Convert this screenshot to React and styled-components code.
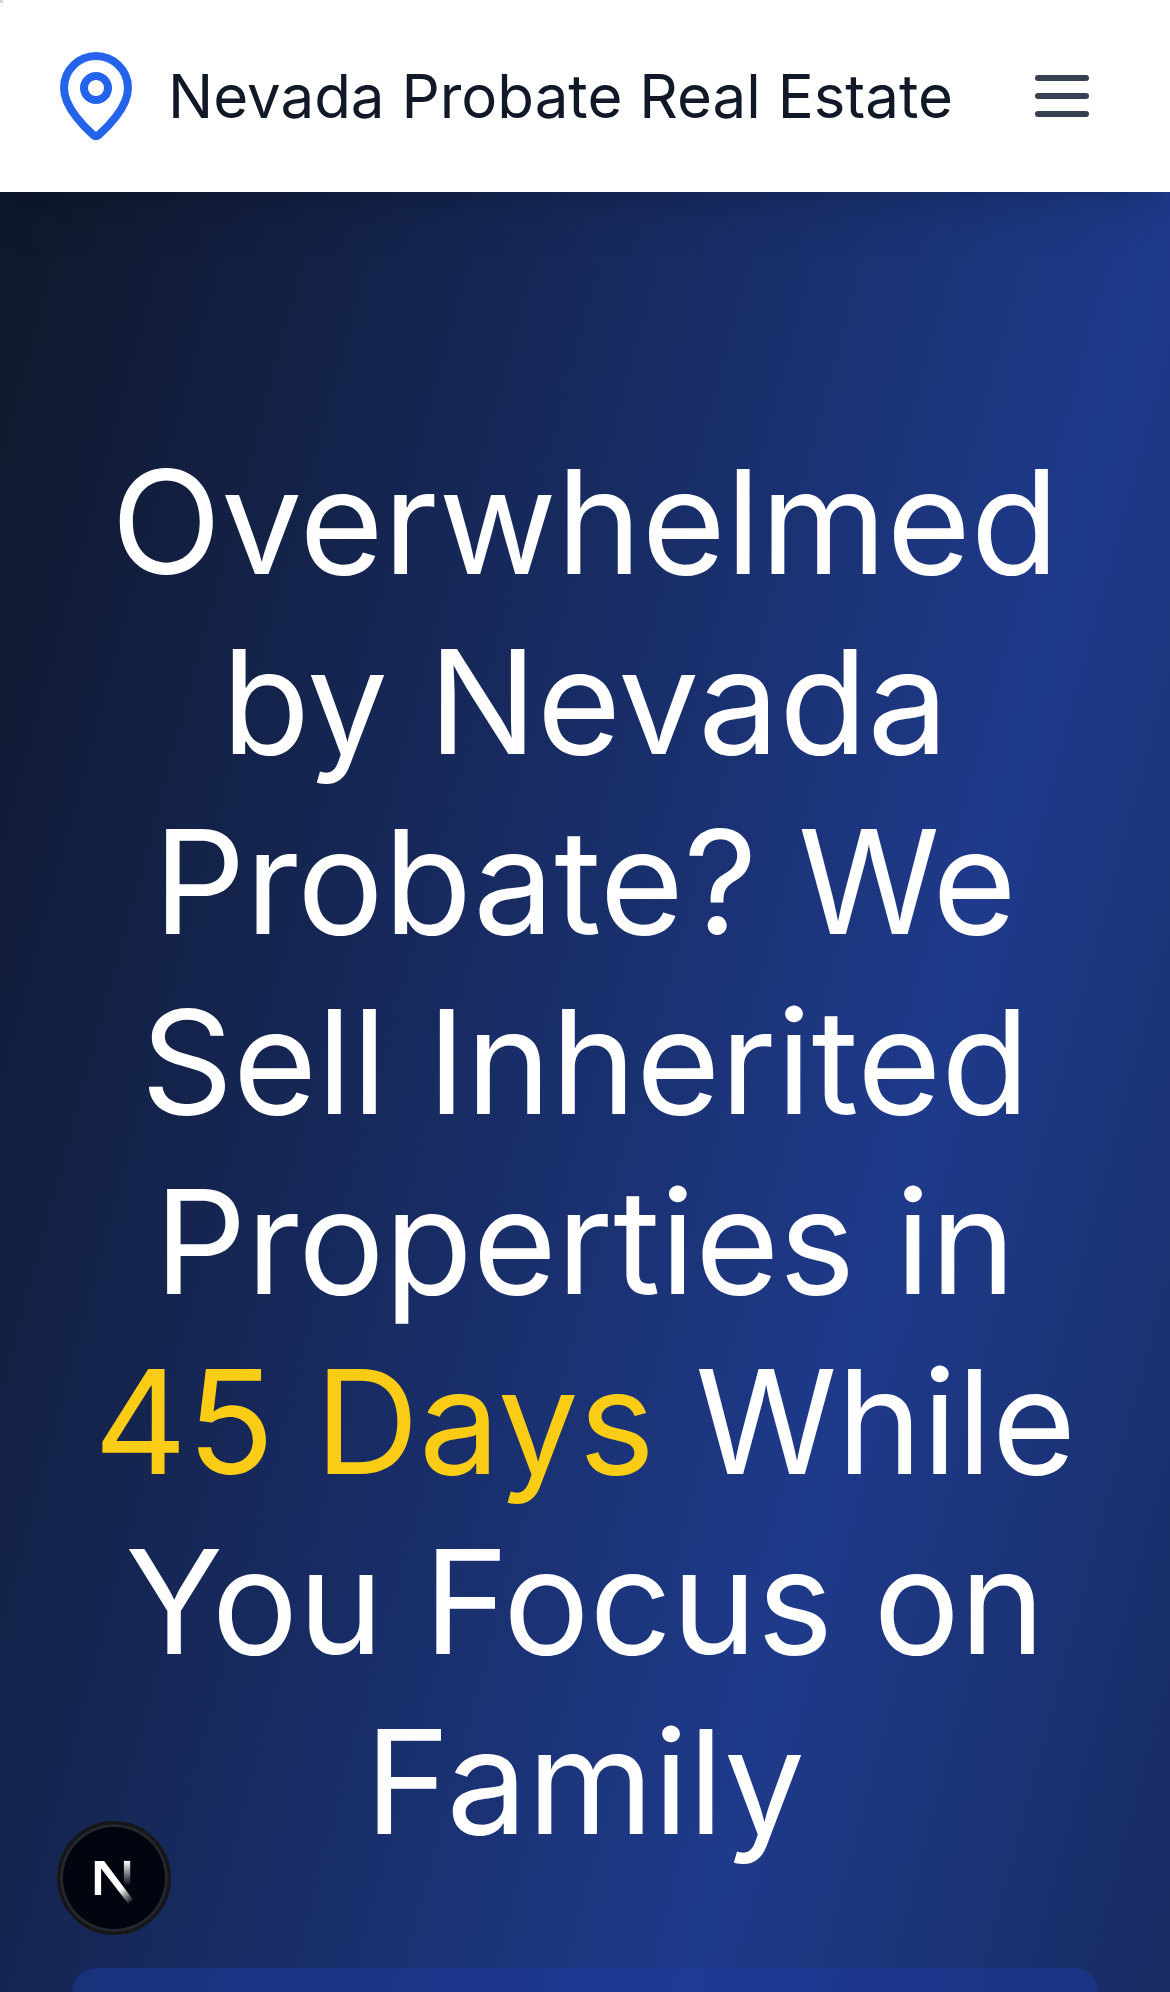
import React from "react";
import styled, { createGlobalStyle } from "styled-components";
import { MapPin } from "lucide-react";

const GlobalStyle = createGlobalStyle`
  * { box-sizing: border-box; }
  body {
    margin: 0;
    background: #ffffff;
    font-family: Inter, "Liberation Sans", sans-serif;
  }
`;

const Page = styled.div`
  display: flex;
  flex-direction: column;
  min-height: 100vh;
`;

const Header = styled.header`
  position: relative;
  z-index: 1;
  display: flex;
  align-items: center;
  justify-content: space-between;
  padding: 36px 48px;
  background: #ffffff;
  box-shadow: 0 30px 45px -9px rgba(0, 0, 0, 0.1), 0 12px 18px -12px rgba(0, 0, 0, 0.1);
`;

const Brand = styled.a`
  display: flex;
  align-items: center;
  gap: 24px;
  color: #2563eb;
  text-decoration: none;
`;

const BrandName = styled.span`
  color: #111827;
  font-size: 60px;
  line-height: 84px;
  white-space: nowrap;
`;

const MenuButton = styled.button`
  display: flex;
  padding: 24px;
  border: 0;
  background: transparent;
  color: #374151;
  cursor: pointer;
`;

const Hero = styled.main`
  display: flex;
  flex: 1;
  flex-direction: column;
  gap: 96px;
  padding: 240px 72px 0;
  background: linear-gradient(to bottom right, #0f172a, #1e3a8a, #0f172a) top / 100% 4360px no-repeat;
`;

const Title = styled.h1`
  margin: 0;
  color: #ffffff;
  font-size: 144px;
  font-weight: 400;
  line-height: 180px;
  text-align: center;
`;

const Highlight = styled.span`
  color: #facc15;
`;

const Panel = styled.section`
  flex: 1;
  min-height: 24px;
  border-radius: 24px 24px 0 0;
  background: rgba(30, 58, 160, 0.5);
`;

const CornerMark = styled.span`
  position: fixed;
  top: 0;
  left: 0;
  z-index: 2;
  width: 3px;
  height: 3px;
  background: #d4d4d4;
`;

const DevBadge = styled.button`
  position: fixed;
  bottom: 57px;
  left: 57px;
  display: flex;
  align-items: center;
  justify-content: center;
  width: 114px;
  height: 114px;
  padding: 0;
  border: 3px solid #171717;
  border-radius: 50%;
  background: #02040f;
  box-shadow: inset 0 0 0 3px #25272f;
  cursor: pointer;
`;

const DevMark = styled.svg`
  flex: none;
`;

function MenuIcon() {
  return (
    <svg width="72" height="72" viewBox="0 0 24 24" fill="none" stroke="currentColor" strokeWidth="2" strokeLinecap="round" aria-hidden="true">
      <path d="M4 6h16M4 12h16M4 18h16" />
    </svg>
  );
}

function DevLogo() {
  return (
    <DevMark width="120" height="120" viewBox="0 0 40 40" fill="none" aria-hidden="true">
      <defs>
        <linearGradient id="diagonal" gradientUnits="userSpaceOnUse" x1="22.4" y1="23.6" x2="26" y2="28.4">
          <stop stopColor="#fff" />
          <stop offset="1" stopColor="#fff" stopOpacity="0" />
        </linearGradient>
        <linearGradient id="stem" gradientUnits="userSpaceOnUse" x1="24" y1="14.3" x2="24" y2="22.6">
          <stop stopColor="#fff" />
          <stop offset="1" stopColor="#fff" stopOpacity="0" />
        </linearGradient>
      </defs>
      <path d="M13.6 14.3h3.1L26.3 27.2l-1.5 1.5L15.7 16.8v8.9h-2.1z" fill="url(#diagonal)" />
      <path d="M23.3 14.3h2.1v8.4h-2.1z" fill="url(#stem)" />
    </DevMark>
  );
}

export default function App() {
  return (
    <>
      <GlobalStyle />
      <CornerMark />
      <Page>
        <Header>
          <Brand href="#">
            <MapPin size={96} aria-hidden="true" />
            <BrandName>Nevada Probate Real Estate</BrandName>
          </Brand>
          <MenuButton type="button" aria-label="Open menu">
            <MenuIcon />
          </MenuButton>
        </Header>
        <Hero>
          <Title>
            Overwhelmed by Nevada Probate? We Sell Inherited Properties in{" "}
            <Highlight>45 Days</Highlight> While You Focus on Family
          </Title>
          <Panel />
        </Hero>
      </Page>
      <DevBadge type="button" aria-label="Open developer tools">
        <DevLogo />
      </DevBadge>
    </>
  );
}
